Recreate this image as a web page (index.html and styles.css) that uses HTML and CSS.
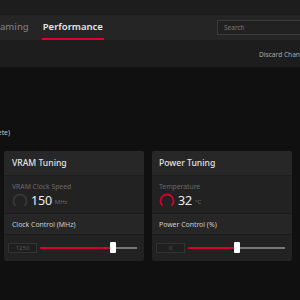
FILE: index.html
```html
<!DOCTYPE html>
<html>
<head>
<meta charset="utf-8">
<link rel="stylesheet" href="styles.css">
</head>
<body>
<div class="topstrip"></div>
<nav class="nav">
  <span class="tab tab-gaming">Gaming</span>
  <span class="tab tab-active">Performance</span>
  <div class="search"><span>Search</span>
    <svg class="search-icon" width="10" height="10" viewBox="0 0 10 10"><circle cx="4" cy="4" r="3" fill="none" stroke="#bbb" stroke-width="1.2"/><path d="M6.3 6.3 L9 9" stroke="#bbb" stroke-width="1.2"/></svg>
  </div>
</nav>
<div class="subbar"><span class="discard">Discard Changes</span></div>
<main class="main">
  <div class="status"><span>(Tuning Complete)</span></div>
  <div class="cards">
    <section class="card">
      <header class="card-head">VRAM Tuning</header>
      <div class="card-body">
        <div class="metric-label">VRAM Clock Speed</div>
        <div class="metric">
          <svg class="gauge" width="16" height="16" viewBox="0 0 16 16"><path d="M3.4 12.6 A6.5 6.5 0 1 1 12.6 12.6" fill="none" stroke="#3a3a3a" stroke-width="1.6"/></svg>
          <span class="value">150</span><span class="unit">MHz</span>
        </div>
      </div>
      <div class="ctrl-head">Clock Control (MHz)</div>
      <div class="ctrl">
        <div class="numbox">1250</div>
        <div class="slider"><div class="fill" style="width:75%"></div><div class="thumb" style="left:72%"></div></div>
      </div>
    </section>
    <section class="card">
      <header class="card-head">Power Tuning</header>
      <div class="card-body">
        <div class="metric-label">Temperature</div>
        <div class="metric">
          <svg class="gauge" width="16" height="16" viewBox="0 0 16 16"><path d="M3.4 12.6 A6.5 6.5 0 1 1 12.6 12.6" fill="none" stroke="#d6002b" stroke-width="1.8"/></svg>
          <span class="value">32</span><span class="unit">°C</span>
        </div>
      </div>
      <div class="ctrl-head">Power Control (%)</div>
      <div class="ctrl">
        <div class="numbox">0</div>
        <div class="slider"><div class="fill" style="width:49%"></div><div class="thumb" style="left:47%"></div></div>
      </div>
    </section>
    <section class="card"></section>
  </div>
</main>
</body>
</html>
```
FILE: styles.css
```css
* { box-sizing: border-box; }
html, body { margin: 0; padding: 0; }
body {
  width: 300px;
  height: 300px;
  overflow: hidden;
  background: #101010;
  font-family: "Noto Sans", "DejaVu Sans", sans-serif;
  color: #ddd;
}
.topstrip { height: 15px; background: #1d1d1d; }
.nav {
  height: 25px;
  background: #252525;
  display: flex;
  align-items: stretch;
  position: relative;
}
.tab {
  font-size: 9.5px;
  font-weight: 600;
  display: flex;
  align-items: center;
  padding-bottom: 2px;
}
.tab-gaming { color: #7a7a7a; margin-left: -7px; font-weight: 500; }
.tab-active {
  color: #e6e6e6;
  margin-left: 13px;
  border-bottom: 2px solid #e0002b;
  padding: 0 1px;
}
.search {
  margin-left: auto;
  margin-right: -14px;
  margin-top: 5px;
  height: 15px;
  width: 97px;
  border: 1px solid #3a3a3a;
  background: #212121;
  display: flex;
  align-items: center;
  padding-left: 6px;
  font-size: 6.5px;
  color: #777;
}
.search-icon { margin-left: auto; margin-right: 2px; }
.subbar {
  height: 27px;
  background: #1d1d1d;
  display: flex;
  align-items: center;
  padding-left: 259px;
}
.discard {
  font-size: 6.6px;
  color: #aaa;
  white-space: nowrap;
  padding-top: 1px;
}
.main { padding-top: 61px; }
.status {
  font-size: 6.8px;
  color: #c8c8c8;
  width: 10px;
  height: 11px;
  display: flex;
  justify-content: flex-end;
  white-space: nowrap;
}
.cards {
  margin-top: 12px;
  display: flex;
  gap: 8px;
  padding-left: 4px;
}
.card {
  flex: 0 0 140px;
  height: 110px;
  background: #222;
  border-radius: 2px;
  overflow: hidden;
}
.card-head {
  height: 24px;
  background: #272727;
  font-size: 8.6px;
  font-weight: 500;
  color: #e2e2e2;
  display: flex;
  align-items: center;
  padding-left: 8px;
  padding-bottom: 1px;
}
.card:nth-child(2) .card-head,
.card:nth-child(2) .card-body,
.card:nth-child(2) .ctrl-head { padding-left: 7px; }
.card-body {
  height: 38px;
  padding: 6px 8px 0;
  border-top: 1px solid #1e1e1e;
}
.metric-label { font-size: 6.8px; color: #6a6a6a; height: 9px; }
.metric { display: flex; align-items: center; margin-top: 2px; }
.gauge { flex: none; }
.value { font-size: 12.5px; color: #eee; margin-left: 3px; line-height: 16px; letter-spacing: -0.2px; }
.unit { font-size: 6px; color: #6a6a6a; margin-left: 3px; margin-top: 2px; }
.ctrl-head {
  height: 22px;
  background: #262626;
  border-top: 1px solid #1a1a1a;
  border-bottom: 1px solid #1a1a1a;
  font-size: 6.9px;
  color: #cfcfcf;
  display: flex;
  align-items: center;
  padding-left: 8px;
}
.ctrl {
  height: 26px;
  display: flex;
  align-items: center;
  padding: 0 7px 0 4px;
  gap: 3px;
}
.numbox {
  width: 29px;
  height: 10px;
  border: 1px solid #333;
  background: #1f1f1f;
  font-size: 6px;
  color: #555;
  display: flex;
  align-items: center;
  justify-content: center;
  flex: none;
}
.slider {
  flex: 1;
  height: 2px;
  background: #777;
  position: relative;
}
.fill { height: 2px; background: #d6002b; }
.thumb {
  position: absolute;
  top: -5px;
  width: 6px;
  height: 11px;
  background: #fff;
  border-radius: 1px;
}
```
